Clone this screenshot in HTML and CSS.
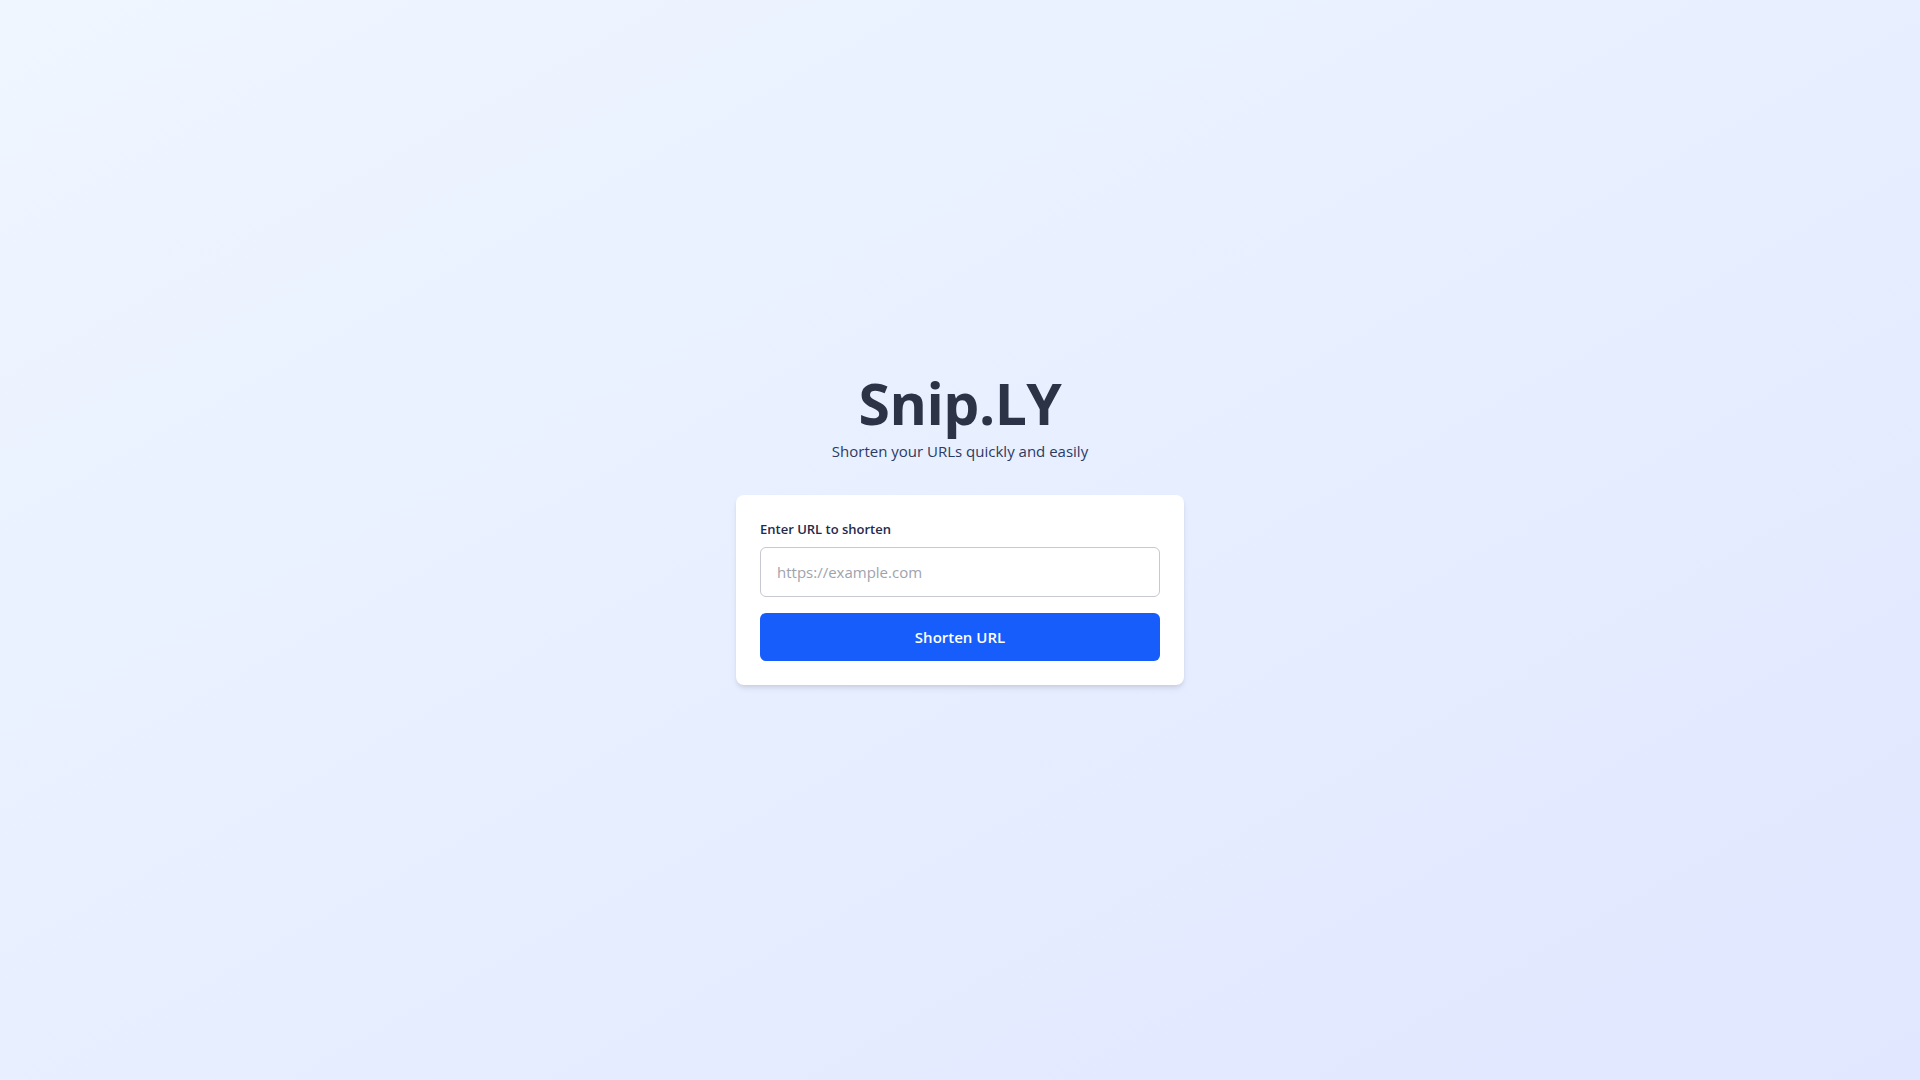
FILE: index.html
```html
<!DOCTYPE html>
<html lang="en">
<head>
<meta charset="utf-8">
<title>Snip.LY</title>
<link rel="stylesheet" href="styles.css">
</head>
<body>
<main class="page">
  <div class="wrap">
    <header class="hero">
      <h1 class="title">Snip.LY</h1>
      <p class="subtitle">Shorten your URLs quickly and easily</p>
    </header>
    <form class="card">
      <label class="label" for="url">Enter URL to shorten</label>
      <input class="input" id="url" type="text" placeholder="https://example.com">
      <button class="btn" type="button">Shorten URL</button>
    </form>
  </div>
</main>
</body>
</html>
```

FILE: styles.css
```css
* { box-sizing: border-box; }
html, body { margin: 0; padding: 0; }
body {
  font-family: "Open Sans", "Noto Sans", "Liberation Sans", sans-serif;
  background: linear-gradient(to bottom right, #eff6ff, #e0e7ff);
  min-height: 100vh;
}
.page {
  min-height: 100vh;
  display: flex;
  justify-content: center;
  padding-top: 368px;
}
.wrap {
  width: 448px;
  display: flex;
  flex-direction: column;
  align-items: stretch;
}
.hero {
  text-align: center;
  margin-bottom: 32px;
}
.title {
  margin: 0;
  font-size: 57px;
  line-height: 71px;
  font-weight: 700;
  color: #2d3346;
  letter-spacing: -0.5px;
}
.subtitle {
  margin: 0;
  font-size: 15px;
  line-height: 24px;
  color: #2c3a62;
}
.card {
  background: #fff;
  border-radius: 8px;
  box-shadow: 0 4px 6px -1px rgba(0,0,0,0.1), 0 2px 4px -1px rgba(0,0,0,0.06);
  padding: 24px;
  display: flex;
  flex-direction: column;
}
.label {
  font-size: 13px;
  line-height: 20px;
  font-weight: 600;
  color: #1f2a4d;
  margin-bottom: 8px;
}
.input {
  height: 50px;
  border: 1px solid #c6c8d2;
  border-radius: 6px;
  padding: 0 16px;
  font-family: inherit;
  font-size: 15px;
  color: #1f2937;
  outline: none;
  margin-bottom: 16px;
}
.input::placeholder { color: #9ea3ae; }
.btn {
  height: 48px;
  border: 0;
  border-radius: 6px;
  background: #165dfb;
  color: #fff;
  font-family: inherit;
  font-size: 15px;
  font-weight: 600;
  cursor: pointer;
}
```
